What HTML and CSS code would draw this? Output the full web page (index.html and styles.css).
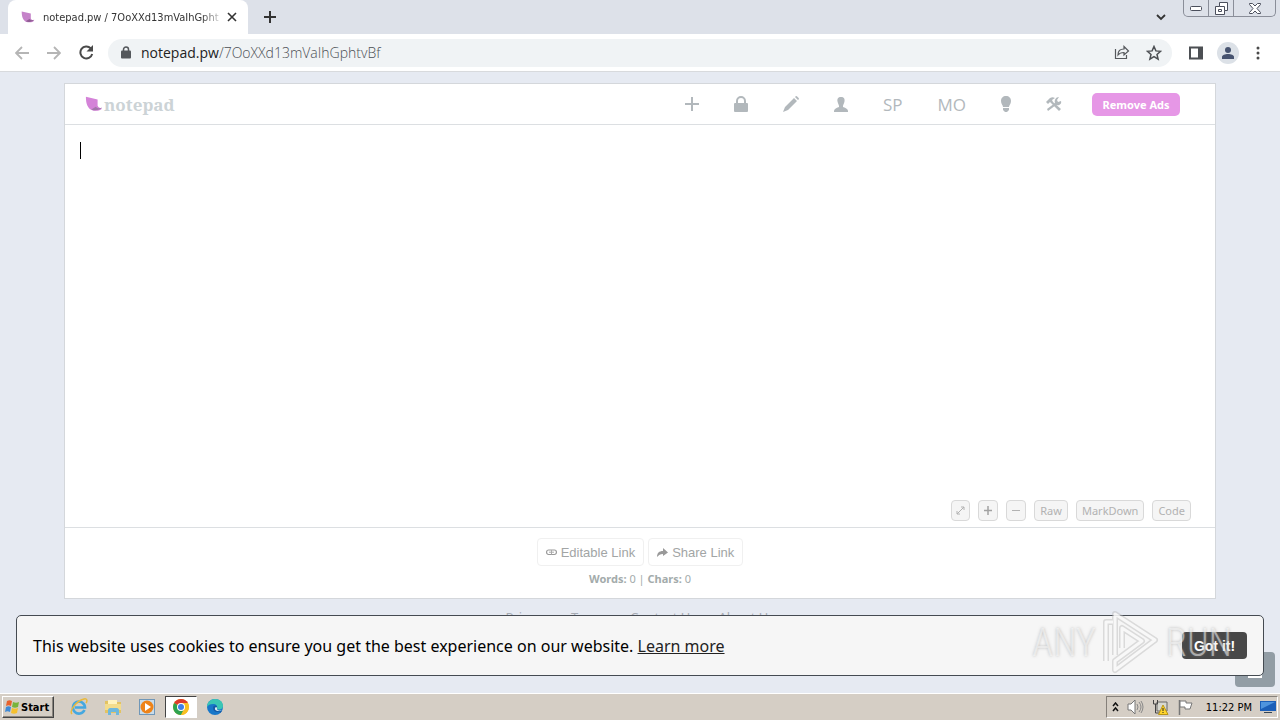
FILE: index.html
```
<!DOCTYPE html>
<html lang="en">
<head>
  <meta charset="UTF-8" />
  <title>notepad.pw</title>
  <link rel="stylesheet" href="styles.css">
</head>
<body>
  <!-- browser tabs -->
  <div class="tabs">
    <div class="tab">
      <svg class="leaf" width="14" height="12" viewBox="0 0 20 16"><path d="M1 0l13 3v7c1 2 3 3 5 3-2 3-8 3-11 2C3 13 1 8 1 0z" fill="#c583c9"/><path d="M7 14c4 2 9 1 12-2-3 1-5 1-7-1z" fill="#8f5c93"/></svg>
      <span class="tab-title">notepad.pw / 7OoXXd13mVaIhGpht</span>
      <button class="icon-btn" aria-label="Close tab"><svg width="10" height="10" viewBox="0 0 10 10"><path d="M1 1l8 8M9 1L1 9" stroke="#333" stroke-width="1.6"/></svg></button>
    </div>
    <button class="icon-btn new-tab" aria-label="New tab"><svg width="12" height="12" viewBox="0 0 12 12"><path d="M6 0v12M0 6h12" stroke="#333" stroke-width="2"/></svg></button>
    <button class="icon-btn tab-search" aria-label="Search tabs"><svg width="10" height="8" viewBox="0 0 10 8"><path d="M1 2l4 4 4-4" fill="none" stroke="#333" stroke-width="1.8"/></svg></button>
    <div class="win-buttons">
      <button aria-label="Minimize"><svg width="12" height="5" viewBox="0 0 12 5"><rect x=".5" y=".5" width="11" height="4" rx="1" fill="#fff" stroke="#4b4f5c"/></svg></button>
      <button aria-label="Restore"><svg width="13" height="13" viewBox="0 0 13 13"><path d="M4.500.500h8v8h-3v4h-9v-8h4z" fill="#fff" stroke="#4b4f5c"/><path d="M4.500 4.500h5v4M3.500 7.500h3v2h-3z" fill="none" stroke="#4b4f5c"/></svg></button>
      <button aria-label="Close"><svg width="12" height="11" viewBox="0 0 12 11"><path d="M.5.5h3L6 3 8.500.500h3v1L8 5.500l3.500 4v1h-3L6 8l-2.500 2.500h-3v-1L4 5.500.500 1.500z" fill="#fff" stroke="#4b4f5c"/></svg></button>
    </div>
  </div>

  <div class="toolbar">
    <button class="icon-btn" aria-label="Back"><svg width="14" height="14" viewBox="0 0 14 14"><path d="M14 7H1M7 1L1 7l6 6" fill="none" stroke="#b5b5b5" stroke-width="1.8"/></svg></button>
    <button class="icon-btn" aria-label="Forward"><svg width="14" height="14" viewBox="0 0 14 14"><path d="M0 7h13M7 1l6 6-6 6" fill="none" stroke="#b5b5b5" stroke-width="1.8"/></svg></button>
    <button class="icon-btn" aria-label="Reload"><svg width="15" height="15" viewBox="0 0 15 15"><path d="M13.200 9a6 6 0 1 1-1.500-5.800" fill="none" stroke="#4a4a4a" stroke-width="2"/><path d="M14 0v6.500H7.500z" fill="#4a4a4a"/></svg></button>
    <div class="address">
      <svg width="10" height="13" viewBox="0 0 10 13"><path d="M2.500 6V3.500a2.500 2.500 0 0 1 5 0V6" fill="none" stroke="#54575b" stroke-width="1.500"/><rect y="4.500" width="10" height="8" rx="1" fill="#54575b"/></svg>
      <span class="url"><b>notepad.pw</b>/7OoXXd13mVaIhGphtvBf</span>
      <button class="icon-btn" aria-label="Share"><svg width="16" height="15" viewBox="0 0 16 15"><path d="M1.500 4v9.500h11V10M4 10c0-4 2-6 6-6V1.500L14.500 6 10 10V7.500C7 7.500 5.500 8 4 10z" fill="none" stroke="#55585c" stroke-width="1.200"/></svg></button>
      <button class="icon-btn" aria-label="Bookmark"><svg width="16" height="16" viewBox="0 0 16 16"><path d="M8 1.500l1.900 4.400 4.700.4-3.600 3.100 1.100 4.700L8 11.600l-4.100 2.500L5 9.400 1.400 6.300l4.700-.4z" fill="none" stroke="#4c4f53" stroke-width="1.500"/></svg></button>
    </div>
    <button class="icon-btn" aria-label="Side panel"><svg width="14" height="14" viewBox="0 0 14 14"><path d="M1 1.500h12v11H1z" fill="#fff" stroke="#4c4f53" stroke-width="2"/><path d="M9 1h4v12H9z" fill="#4c4f53"/></svg></button>
    <button class="icon-btn profile" aria-label="Profile"><svg width="12" height="12" viewBox="0 0 12 12"><circle cx="6" cy="3" r="3" fill="#47536f"/><path d="M0 12v-2c0-4 12-4 12 0v2z" fill="#47536f"/></svg></button>
    <button class="icon-btn" aria-label="Menu"><svg width="4" height="14" viewBox="0 0 4 14"><g fill="#4a4a4a"><circle cx="2" cy="2" r="1.500"/><circle cx="2" cy="7" r="1.500"/><circle cx="2" cy="12" r="1.500"/></g></svg></button>
  </div>

  <main class="page">
    <div class="paper">
      <header class="header">
        <a class="logo" href="#">
          <svg class="leaf" width="18" height="16" viewBox="0 0 20 16"><path d="M1 0l13 3v7c1 2 3 3 5 3-2 3-8 3-11 2C3 13 1 8 1 0z" fill="#d483d8"/><path d="M7 14c4 2 9 1 12-2-3 1-5 1-7-1z" fill="#a276aa"/></svg><span>notepad</span>
        </a>
        <nav class="nav">
          <a href="#" aria-label="New note"><svg width="14" height="14" viewBox="0 0 14 14"><path d="M7 0v14M0 7h14" stroke="#b2b8bc" stroke-width="2"/></svg></a>
          <a href="#" aria-label="Password"><svg width="14" height="16" viewBox="0 0 14 16"><path d="M3 8V5a4 4 0 0 1 8 0v3" fill="none" stroke="#b2b8bc" stroke-width="2"/><rect y="7" width="14" height="9" rx="1" fill="#b2b8bc"/></svg></a>
          <a href="#" aria-label="Change URL"><svg width="16" height="16" viewBox="0 0 16 16"><path d="M0 16l2-5L11 2l3 3-9 9zM12 1l1-1c1 0 3 2 3 3l-1 1z" fill="#b2b8bc"/></svg></a>
          <a href="#" aria-label="Account"><svg width="14" height="15" viewBox="0 0 14 15"><path d="M7 0c3 0 4 2 3.500 4.500C10 7 9 8 9 9v1c3 1 5 2 5 4v1H0v-1c0-2 2-3 5-4V9C5 8 4 7 3.500 4.500 3 2 4 0 7 0z" fill="#b2b8bc"/></svg></a>
          <a href="#">SP</a>
          <a href="#">MO</a>
          <a href="#" aria-label="Dark mode"><svg width="10" height="16" viewBox="0 0 10 16"><path d="M5 0c3 0 5 2 5 5 0 3-2 4-2 6H2c0-2-2-3-2-6 0-3 2-5 5-5zM2 12h6v2L6 16H4l-2-2z" fill="#b2b8bc"/></svg></a>
          <a href="#" aria-label="Tools"><svg width="16" height="16" viewBox="0 0 16 16"><path d="M0 6l4-4c2-1 3-1 5 0L6 4l1 2 8 7-2 2-8-8-1-1-2 2z" fill="#b2b8bc"/><path d="M2 15l-1-2 8-6c-1-3 1-6 4-6l-2 3 1 2 3-1c1 3-2 5-5 4z" fill="#b2b8bc"/></svg></a>
        </nav>
        <button class="remove-ads">Remove Ads</button>
      </header>

      <div class="editor">
        <textarea aria-label="Note"></textarea>
        <span class="caret"></span>
        <div class="modes">
          <button aria-label="Full screen"><svg width="9" height="9" viewBox="0 0 9 9"><path d="M1 8l7-7M5 1h3v3M1 5v3h3" fill="none" stroke="#b2b2b2"/></svg></button>
          <button aria-label="Bigger text"><svg width="10" height="9" viewBox="0 0 10 9"><path d="M5 0v9M1 4.500h8" stroke="#a2a2a2" stroke-width="1.500"/></svg></button>
          <button aria-label="Smaller text"><svg width="10" height="9" viewBox="0 0 10 9"><path d="M1 4.500h8" stroke="#b2b2b2"/></svg></button>
          <button>Raw</button>
          <button>MarkDown</button>
          <button>Code</button>
        </div>
      </div>

      <div class="share">
        <div class="share-buttons">
          <button><svg width="11" height="7" viewBox="0 0 11 7"><rect x=".6" y="1" width="9.800" height="4.500" rx="2" fill="none" stroke="#999" stroke-width="1.200"/><path d="M3 3.200h5M5.500 1v4.500" stroke="#aaa"/></svg>Editable Link</button>
          <button><svg width="11" height="9" viewBox="0 0 11 9"><path d="M0 9c0-4 2-6 6-6V0l5 4.500L6 8V6C3 6 2 7 0 9z" fill="#999"/></svg>Share Link</button>
        </div>
        <p class="counts"><b>Words:</b> 0 | <b>Chars:</b> 0</p>
      </div>
    </div>

    <footer class="links">
      <a href="#">Privacy</a>
      <a href="#">Terms</a>
      <a href="#">Contact Us</a>
      <a href="#">About Us</a>
    </footer>

    <button class="chat" aria-label="Feedback"><svg width="14" height="16" viewBox="0 0 14 16"><path d="M1 1h12v14H1z" fill="none" stroke="#fff" stroke-width="2"/></svg></button>

    <div class="cookies">
      <p>This website uses cookies to ensure you get the best experience on our website. <a href="#">Learn more</a></p>
      <button>Got it!</button>
    </div>

    <div class="watermark">
      <span>ANY</span>
      <svg width="58" height="64" viewBox="0 0 58 64"><path d="M4 50V11h7M13 44V3l40 26-40 30V50l27-20-20-13v20" fill="none" stroke="#b9b9b9" stroke-opacity=".45" stroke-width="6" stroke-linejoin="round"/><path d="M4 50V11h7M13 44V3l40 26-40 30V50l27-20-20-13v20" fill="none" stroke="#fff" stroke-opacity=".8" stroke-width="3" stroke-linejoin="round"/></svg>
      <span>RUN</span>
    </div>
  </main>

  <div class="taskbar">
    <button class="start"><svg width="16" height="16" viewBox="0 0 16 16"><path d="M3 2c2-1 3-1 5 0L7 7C5 6 4 6 2 7z" fill="#e8622c"/><path d="M9 3c2 1 4 1 6 0l-1 5c-2 1-4 1-6 0z" fill="#78b43c"/><path d="M2 8c2-1 3-1 5 0l-1 5c-2-1-3-1-5 0z" fill="#3f8ad6"/><path d="M8 9c2 1 4 1 6 0l-1 5c-2 1-4 1-6 0z" fill="#f5c02e"/></svg>Start</button>
    <div class="apps">
      <button aria-label="Internet Explorer"><svg width="18" height="18" viewBox="0 0 18 18"><path d="M14.500 12A6 6 0 1 1 15 9.500H5" fill="none" stroke="#45a8e0" stroke-width="2.600"/><path d="M2 16C-1 13 6 3 14 1c4-1 3 3 2 4" fill="none" stroke="#e9b93c" stroke-width="1.500"/></svg></button>
      <button aria-label="Explorer"><svg width="18" height="18" viewBox="0 0 18 18"><path d="M1 3h6l1 1h9v11H1z" fill="#e3c362"/><path d="M4 2h9v5H4z" fill="#fff3bf"/><path d="M1 6h16v6H1z" fill="#f3dc8c"/><path d="M4 17v-5c0-1 1-2 2-2h7c1 0 2 1 2 2v5h-3v-3H7v3z" fill="#6fb8dd"/></svg></button>
      <button aria-label="Media Player"><svg width="18" height="18" viewBox="0 0 18 18"><rect x="1.500" y="1.500" width="15" height="15" fill="#c9dcea" stroke="#7097b8"/><circle cx="9" cy="9" r="6.500" fill="#ee8318"/><path d="M7 5l6 4-6 4z" fill="#fff"/></svg></button>
      <button class="active" aria-label="Chrome"><svg width="16" height="16" viewBox="0 0 16 16"><circle cx="8" cy="8" r="8" fill="#f8bf22"/><path d="M8 8L1.100 4a8 8 0 0 1 13.800 0z" fill="#dd3b2c"/><path d="M8 8L1.100 4A8 8 0 0 0 8 16l3-6z" fill="#2fa350"/><path d="M8 8V4h6.900A8 8 0 0 1 8 16l3.500-6z" fill="#f8bf22"/><circle cx="8" cy="8" r="4" fill="#fff"/><circle cx="8" cy="8" r="3" fill="#3f7fe8"/></svg></button>
      <button aria-label="Edge"><svg width="16" height="16" viewBox="0 0 16 16"><circle cx="8" cy="8" r="8" fill="#1877c9"/><path d="M0 8c0-5 4-8 8-8 5 0 8 3 8 7 0 3-3 4-6 3 1-3-1-5-4-5-3 0-5 1-6 3z" fill="#3ac6b4"/><path d="M10 10c-1-1 0-1 0-2 0-2-4-2-4 1 0 4 4 5 8 3 1-1 1-1 1 0a7 7 0 0 1-2 2" fill="#155aa6"/><path d="M15 11c-2 1-4 1-5-1 0-1 0-2-1-2-2 1-1 4 2 4 2 0 3 0 4-1z" fill="#dcebf2"/></svg></button>
    </div>
    <div class="tray">
      <svg width="7" height="10" viewBox="0 0 7 10"><path d="M1 4l2.500-3L6 4M1 9l2.500-3L6 9" fill="none" stroke="#111" stroke-width="1.500"/></svg>
      <svg width="17" height="16" viewBox="0 0 17 16"><path d="M1 5h3l4-4v14l-4-4H1z" fill="#fff" stroke="#777"/><path d="M10 5q2 3 0 6M12 3q4 5 0 10M14 2q4 6 0 12" fill="none" stroke="#888"/></svg>
      <svg width="17" height="16" viewBox="0 0 17 16"><path d="M5 3h10v9H5z" fill="#d8d8d0" stroke="#666"/><path d="M1.500 1v4h4V1M3.500 5v9H9" fill="none" stroke="#444"/><path d="M11 6l5 9.500H6.500z" fill="#ffd52b" stroke="#b99516"/><path d="M11 9v3M11 13v1" stroke="#222"/></svg>
      <svg width="17" height="16" viewBox="0 0 17 16"><path d="M2.500 1v15" stroke="#777" stroke-width="1.500"/><path d="M3 2h6v2h6l-2 6H8V8H3z" fill="#fff" stroke="#777"/></svg>
      <span class="clock">11:22 PM</span>
      <svg width="16" height="14" viewBox="0 0 16 14"><path d="M0 1h16v10H0z" fill="#1c5fb8"/><path d="M1 2h14L1 9z" fill="#4f94de"/><path d="M4 12h8v1H4z" fill="#345"/></svg>
    </div>
  </div>
</body>
</html>
```

FILE: styles.css
```
* {
  box-sizing: border-box;
}

body {
  margin: 0;
  height: 100vh;
  display: flex;
  flex-direction: column;
  overflow: hidden;
  background: #e6eaf2;
  font-family: 'Noto Sans', 'Open Sans', sans-serif;
}

svg {
  display: block;
  flex: none;
}

p {
  margin: 0;
}

button {
  font-family: inherit;
  cursor: pointer;
}

.icon-btn {
  padding: 0;
  border: none;
  background: none;
}

/* browser */
.tabs {
  display: flex;
  align-items: center;
  height: 34px;
  flex: none;
  padding: 0 4px 0 8px;
  background: #dde1e9;
}

.tab {
  display: flex;
  align-items: center;
  gap: 8px;
  width: 240px;
  height: 34px;
  padding: 0 11px 0 13px;
  background: #fff;
  border-radius: 8px 8px 0 0;
}

.tab-title {
  flex: 1;
  margin-right: -6px;
  white-space: nowrap;
  font-family: 'DejaVu Sans Condensed', 'DejaVu Sans', sans-serif;
  font-size: 11px;
  color: #333;
  -webkit-mask-image: linear-gradient(to left, transparent, #000 24px);
  mask-image: linear-gradient(to left, transparent, #000 24px);
}

.new-tab {
  margin-left: 16px;
}

.tab-search {
  margin-left: auto;
  margin-right: 17px;
}

.win-buttons {
  display: flex;
  align-self: flex-start;
  height: 17px;
  border: 1px solid #8a8e99;
  border-top: none;
  border-radius: 0 0 5px 5px;
}

.win-buttons button {
  display: flex;
  align-items: center;
  justify-content: center;
  width: 25px;
  padding: 0;
  border: none;
  border-right: 1px solid #8a8e99;
  background: none;
}

.win-buttons button:last-child {
  width: 41px;
  border-right: none;
}

.toolbar {
  display: flex;
  align-items: center;
  gap: 18px;
  height: 38px;
  flex: none;
  padding: 0 20px 0 15px;
  background: #fff;
  border-bottom: 1px solid #d8dadd;
}

.address {
  flex: 1;
  display: flex;
  align-items: center;
  gap: 16px;
  height: 28px;
  margin: 0 -4px;
  padding: 0 10px 0 13px;
  background: #f0f3f5;
  border-radius: 14px;
}

.url {
  flex: 1;
  margin-left: -6px;
  font-family: 'Open Sans', 'Noto Sans', sans-serif;
  font-size: 14px;
  font-weight: 300;
  color: #4b4f54;
}

.url b {
  font-weight: normal;
  color: #222;
}

.profile {
  display: flex;
  align-items: center;
  justify-content: center;
  width: 22px;
  height: 22px;
  margin: 0 -1px 0 -4px;
  border-radius: 50%;
  background: #dce1e7;
}

.toolbar > .icon-btn:nth-last-child(3) {
  margin-left: 3px;
}

/* note page */
.page {
  flex: 1;
  min-height: 0;
  position: relative;
  display: flex;
  flex-direction: column;
  padding-top: 11px;
}

.paper {
  flex: 1;
  display: flex;
  flex-direction: column;
  width: 90%;
  margin: 0 auto;
  background: #fff;
  border: 1px solid #d4d7db;
}

.header {
  display: flex;
  align-items: center;
  height: 41px;
  padding: 0 35px 0 20px;
  border-bottom: 1px solid #dcdfe2;
}

.logo {
  display: flex;
  align-items: center;
  gap: 1px;
  margin-right: auto;
  color: #ccd3d6;
  text-decoration: none;
  font-family: 'Noto Serif', 'Liberation Serif', serif;
  font-size: 17px;
  font-weight: bold;
}

.nav {
  display: flex;
  align-items: center;
  gap: 35px;
  margin-right: 30px;
}

.nav a {
  color: #b2b8bc;
  font-family: 'Open Sans', 'Noto Sans', sans-serif;
  font-size: 17px;
  text-decoration: none;
}

.remove-ads {
  width: 88px;
  height: 23px;
  padding: 0;
  border: none;
  border-radius: 5px;
  background: #e697e6;
  color: #fff;
  font-size: 11px;
  font-weight: bold;
}

.editor {
  flex: 1;
  display: flex;
  position: relative;
}

textarea {
  flex: 1;
  padding: 15px;
  border: none;
  outline: none;
  resize: none;
  background: none;
  font-family: inherit;
  font-size: 16px;
}

.caret {
  position: absolute;
  left: 15px;
  top: 17px;
  width: 1px;
  height: 17px;
  background: #000;
}

.modes {
  position: absolute;
  right: 24px;
  bottom: 6px;
  display: flex;
  gap: 8px;
}

.modes button {
  display: flex;
  align-items: center;
  height: 21px;
  padding: 0 5px;
  border: 1px solid #d9d9d9;
  border-radius: 4px;
  background: #f5f5f5;
  color: #b2b2b2;
  font-size: 11px;
}

.modes button:has(svg) {
  padding: 0 4px;
}

.share {
  height: 71px;
  padding-top: 10px;
  border-top: 1px solid #dcdfe2;
  text-align: center;
}

.share-buttons {
  display: flex;
  justify-content: center;
  gap: 4px;
}

.share-buttons button {
  display: flex;
  align-items: center;
  gap: 4px;
  height: 28px;
  padding: 0 8px;
  border: 1px solid #f0f0f0;
  border-radius: 4px;
  background: #fff;
  color: #a2a5a5;
  font-family: 'Liberation Sans', Arial, sans-serif;
  font-size: 13px;
}

.counts {
  margin-top: 5px;
  color: #a3abab;
  font-size: 11px;
  line-height: 16px;
}

.links {
  display: flex;
  justify-content: center;
  gap: 22px;
  height: 94px;
  flex: none;
  padding-top: 8px;
}

.links a {
  color: #a6abb3;
  font-size: 13px;
  line-height: 20px;
  text-decoration: none;
}

.chat {
  position: absolute;
  right: 5px;
  bottom: 6px;
  display: flex;
  align-items: center;
  justify-content: center;
  width: 40px;
  height: 35px;
  border: none;
  border-radius: 4px;
  background: #929da5;
}

.cookies {
  position: absolute;
  left: 16px;
  right: 16px;
  bottom: 17px;
  display: flex;
  align-items: center;
  justify-content: space-between;
  height: 61px;
  padding: 0 16px;
  border: 1px solid #454b52;
  border-radius: 5px;
  background: #f6f6f6;
  color: #000;
  font-size: 16px;
}

.cookies a {
  color: #222;
}

.cookies button {
  width: 65px;
  height: 27px;
  padding: 0;
  border: none;
  border-radius: 4px;
  background: #484848;
  color: #fff;
  font-family: 'Liberation Sans', Arial, sans-serif;
  font-size: 14px;
  font-weight: bold;
}

.watermark {
  position: absolute;
  right: 48px;
  bottom: 18px;
  display: flex;
  align-items: center;
  gap: 6px;
  color: rgba(255, 255, 255, 0.5);
  font-family: 'Roboto Condensed', 'Liberation Sans Narrow', sans-serif;
  font-size: 38px;
  font-weight: 300;
  text-shadow: 0 0 3px rgba(130, 130, 130, 0.5);
  pointer-events: none;
}

/* windows taskbar */
.taskbar {
  display: flex;
  align-items: center;
  height: 27px;
  flex: none;
  padding: 0 2px;
  background: #d5cec5;
  border-top: 1px solid #fff;
  font-family: 'DejaVu Sans Condensed', 'DejaVu Sans', sans-serif;
}

.start {
  display: flex;
  align-items: center;
  gap: 1px;
  width: 52px;
  height: 22px;
  padding: 0 1px;
  border: 1px solid;
  border-color: #fff #444 #444 #fff;
  box-shadow: inset -1px -1px #8a857e;
  background: #d5cec5;
  font-size: 11px;
  font-weight: bold;
}

.apps {
  display: flex;
  gap: 2px;
  margin-left: 9px;
}

.apps button {
  display: flex;
  align-items: center;
  justify-content: center;
  width: 32px;
  height: 22px;
  padding: 0;
  border: none;
  background: none;
}

.apps .active {
  border: 1px solid;
  border-color: #444 #fff #fff #444;
  background: #fff;
}

.tray {
  display: flex;
  align-items: center;
  gap: 8px;
  height: 22px;
  margin-left: auto;
  padding: 0 1px 0 5px;
  border: 1px solid;
  border-color: #85807a #fff #fff #85807a;
}

.clock {
  margin-left: 4px;
  font-size: 11px;
}
```
